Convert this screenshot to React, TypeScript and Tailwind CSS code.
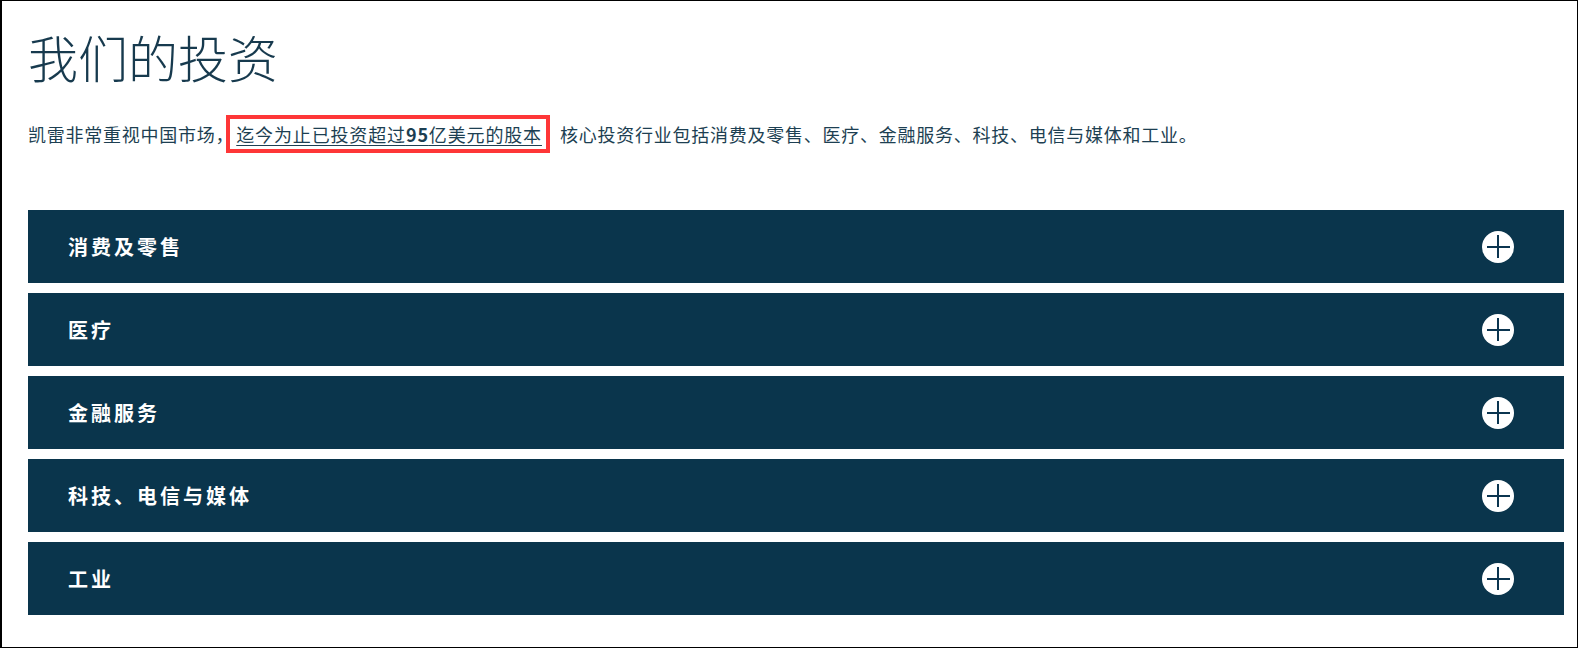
const sectors = ["消费及零售", "医疗", "金融服务", "科技、电信与媒体", "工业"]

function PlusIcon() {
  return (
    <span className="relative flex h-8 w-8 items-center justify-center rounded-full bg-white">
      <span className="absolute h-[2px] w-[23px] bg-[#0b3550]" />
      <span className="absolute h-[23px] w-[2px] bg-[#0b3550]" />
    </span>
  )
}

function SectorRow({ name }: { name: string }) {
  return (
    <button className="flex h-[73px] w-full items-center justify-between bg-[#0a354c] pl-10 pr-[50px] text-left">
      <span className="text-[20px] font-bold leading-none tracking-[3px] text-white">{name}</span>
      <PlusIcon />
    </button>
  )
}

export default function App() {
  return (
    <div
      className="h-[648px] w-[1578px] border border-l-2 border-black bg-white"
      style={{ fontFamily: '"Noto Sans CJK SC", "Noto Sans", sans-serif' }}
    >
      <div className="w-[1536px] pl-[26px]">
        <h1 className="pt-[30px] text-[50px] font-light leading-none text-[#173a4e]">我们的投资</h1>

        <p className="mt-[34px] flex items-center text-[18px] leading-[22px] tracking-[0.75px] text-[#1d3f52]">
          <span className="mr-[-8px]">凯雷非常重视中国市场，</span>
          <span className="border-4 border-[#fe3637] py-[4px] pl-[6px] pr-[4px] tracking-[0.85px]">
            <span className="underline decoration-1 underline-offset-[3px]">
              迄今为止已投资超过<span className="font-bold">95</span>亿美元的股本
            </span>
          </span>
          <span className="ml-[10px]">核心投资行业包括消费及零售、医疗、金融服务、科技、电信与媒体和工业。</span>
        </p>

        <div className="mt-[57px] flex w-[1536px] flex-col gap-[10px]">
          {sectors.map((s) => (
            <SectorRow key={s} name={s} />
          ))}
        </div>
      </div>
    </div>
  )
}
